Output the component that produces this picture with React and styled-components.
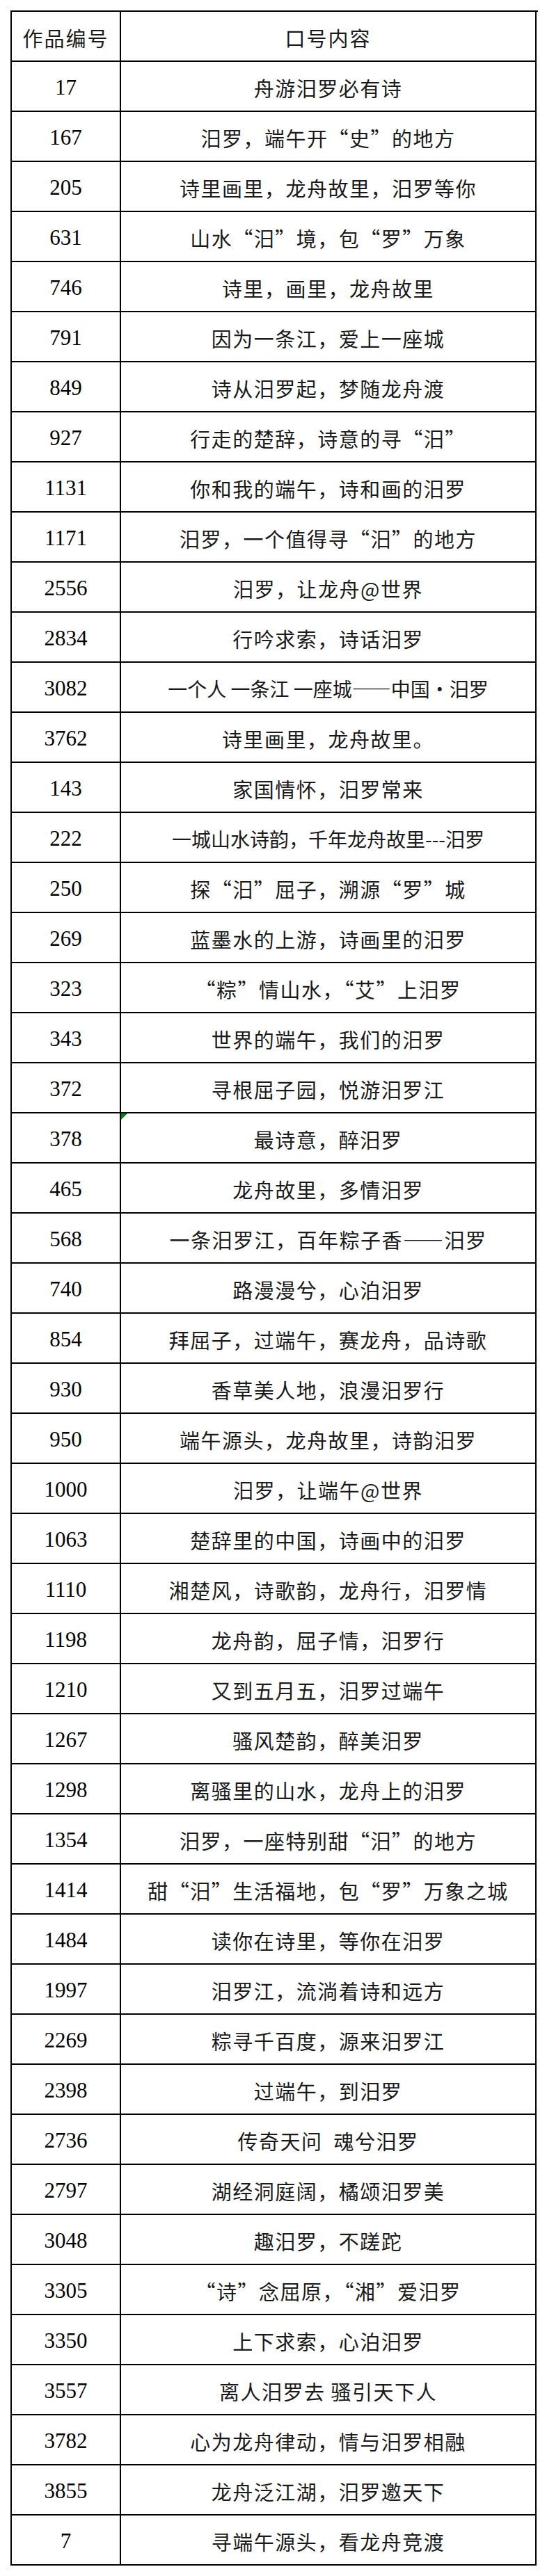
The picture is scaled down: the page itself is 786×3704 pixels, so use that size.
import React from "react";
import styled, { createGlobalStyle } from "styled-components";

const rows = [
  ["17", "舟游汨罗必有诗"],
  ["167", "汨罗，端午开“史”的地方"],
  ["205", "诗里画里，龙舟故里，汨罗等你"],
  ["631", "山水“汨”境，包“罗”万象"],
  ["746", "诗里，画里，龙舟故里"],
  ["791", "因为一条江，爱上一座城"],
  ["849", "诗从汨罗起，梦随龙舟渡"],
  ["927", "行走的楚辞，诗意的寻“汨”"],
  ["1131", "你和我的端午，诗和画的汨罗"],
  ["1171", "汨罗，一个值得寻“汨”的地方"],
  ["2556", "汨罗，让龙舟@世界"],
  ["2834", "行吟求索，诗话汨罗"],
  ["3082", "一个人 一条江 一座城——中国•汨罗", true],
  ["3762", "诗里画里，龙舟故里。"],
  ["143", "家国情怀，汨罗常来"],
  ["222", "一城山水诗韵，千年龙舟故里---汨罗", true],
  ["250", "探“汨”屈子，溯源“罗”城"],
  ["269", "蓝墨水的上游，诗画里的汨罗"],
  ["323", "“粽”情山水，“艾”上汨罗"],
  ["343", "世界的端午，我们的汨罗"],
  ["372", "寻根屈子园，悦游汨罗江"],
  ["378", "最诗意，醉汨罗"],
  ["465", "龙舟故里，多情汨罗"],
  ["568", "一条汨罗江，百年粽子香——汨罗"],
  ["740", "路漫漫兮，心泊汨罗"],
  ["854", "拜屈子，过端午，赛龙舟，品诗歌"],
  ["930", "香草美人地，浪漫汨罗行"],
  ["950", "端午源头，龙舟故里，诗韵汨罗"],
  ["1000", "汨罗，让端午@世界"],
  ["1063", "楚辞里的中国，诗画中的汨罗"],
  ["1110", "湘楚风，诗歌韵，龙舟行，汨罗情"],
  ["1198", "龙舟韵，屈子情，汨罗行"],
  ["1210", "又到五月五，汨罗过端午"],
  ["1267", "骚风楚韵，醉美汨罗"],
  ["1298", "离骚里的山水，龙舟上的汨罗"],
  ["1354", "汨罗，一座特别甜“汨”的地方"],
  ["1414", "甜“汨”生活福地，包“罗”万象之城"],
  ["1484", "读你在诗里，等你在汨罗"],
  ["1997", "汨罗江，流淌着诗和远方"],
  ["2269", "粽寻千百度，源来汨罗江"],
  ["2398", "过端午，到汨罗"],
  ["2736", "传奇天问  魂兮汨罗"],
  ["2797", "湖经洞庭阔，橘颂汨罗美"],
  ["3048", "趣汨罗，不蹉跎"],
  ["3305", "“诗”念屈原，“湘”爱汨罗"],
  ["3350", "上下求索，心泊汨罗"],
  ["3557", "离人汨罗去 骚引天下人"],
  ["3782", "心为龙舟律动，情与汨罗相融"],
  ["3855", "龙舟泛江湖，汨罗邀天下"],
  ["7", "寻端午源头，看龙舟竞渡"]
];

// the one cell that carries Excel's green corner flag
const FLAGGED = "378";

const GlobalStyle = createGlobalStyle`
  html, body {
    margin: 0;
    background: #fff;
  }
`;

const Page = styled.div`
  padding: 15px;
  color: #000;
`;

const Sheet = styled.div`
  display: grid;
  grid-template-columns: 157px 597px;
  grid-auto-rows: 72px;
  width: 756px;
  border-top: 2px solid #000;
  border-left: 2px solid #000;
`;

const Cell = styled.div`
  position: relative;
  box-sizing: border-box;
  display: flex;
  align-items: center;
  justify-content: center;
  padding-top: 4px;
  border-right: 2px solid #000;
  border-bottom: 2px solid #000;
  white-space: pre;
`;

const HeadCell = styled(Cell)`
  font-family: "Noto Sans CJK SC", sans-serif;
  font-size: 29px;
  letter-spacing: 2px;
  color: #1a1a1a;
`;

const NumCell = styled(Cell)`
  font-family: "Liberation Serif", serif;
  font-size: 31px;
`;

const TextCell = styled(Cell)`
  font-family: "Noto Sans CJK SC", sans-serif;
  font-size: ${p => (p.tight ? "28px" : "29px")};
  letter-spacing: ${p => (p.tight ? "0px" : "1.5px")};
  color: #1a1a1a;
`;

const Flag = styled.span`
  position: absolute;
  top: 0;
  left: 0;
  width: 0;
  height: 0;
  border-top: 9px solid #008000;
  border-right: 9px solid transparent;
`;

const App = () => (
  <Page lang="zh-CN">
    <GlobalStyle />
    <Sheet>
      <HeadCell>作品编号</HeadCell>
      <HeadCell>口号内容</HeadCell>
      {rows.map(([id, text, tight]) => (
        <React.Fragment key={id}>
          <NumCell>{id}</NumCell>
          <TextCell tight={tight}>
            {id === FLAGGED && <Flag />}
            {text}
          </TextCell>
        </React.Fragment>
      ))}
    </Sheet>
  </Page>
);

export default App;
